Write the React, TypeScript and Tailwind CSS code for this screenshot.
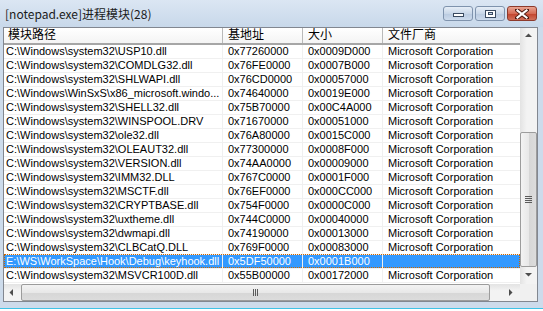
import React from "react";

const rows: [string, string, string, string][] = [
  ["C:\\Windows\\system32\\USP10.dll", "0x77260000", "0x0009D000", "Microsoft Corporation"],
  ["C:\\Windows\\system32\\COMDLG32.dll", "0x76FE0000", "0x0007B000", "Microsoft Corporation"],
  ["C:\\Windows\\system32\\SHLWAPI.dll", "0x76CD0000", "0x00057000", "Microsoft Corporation"],
  ["C:\\Windows\\WinSxS\\x86_microsoft.windo...", "0x74640000", "0x0019E000", "Microsoft Corporation"],
  ["C:\\Windows\\system32\\SHELL32.dll", "0x75B70000", "0x00C4A000", "Microsoft Corporation"],
  ["C:\\Windows\\system32\\WINSPOOL.DRV", "0x71670000", "0x00051000", "Microsoft Corporation"],
  ["C:\\Windows\\system32\\ole32.dll", "0x76A80000", "0x0015C000", "Microsoft Corporation"],
  ["C:\\Windows\\system32\\OLEAUT32.dll", "0x77300000", "0x0008F000", "Microsoft Corporation"],
  ["C:\\Windows\\system32\\VERSION.dll", "0x74AA0000", "0x00009000", "Microsoft Corporation"],
  ["C:\\Windows\\system32\\IMM32.DLL", "0x767C0000", "0x0001F000", "Microsoft Corporation"],
  ["C:\\Windows\\system32\\MSCTF.dll", "0x76EF0000", "0x000CC000", "Microsoft Corporation"],
  ["C:\\Windows\\system32\\CRYPTBASE.dll", "0x754F0000", "0x0000C000", "Microsoft Corporation"],
  ["C:\\Windows\\system32\\uxtheme.dll", "0x744C0000", "0x00040000", "Microsoft Corporation"],
  ["C:\\Windows\\system32\\dwmapi.dll", "0x74190000", "0x00013000", "Microsoft Corporation"],
  ["C:\\Windows\\system32\\CLBCatQ.DLL", "0x769F0000", "0x00083000", "Microsoft Corporation"],
  ["E:\\WS\\WorkSpace\\Hook\\Debug\\keyhook.dll", "0x5DF50000", "0x0001B000", ""],
  ["C:\\Windows\\system32\\MSVCR100D.dll", "0x55B00000", "0x00172000", "Microsoft Corporation"],
];

const SEL = 15;

function CapBtn({ kind }: { kind: "min" | "max" | "close" }) {
  const isClose = kind === "close";
  return (
    <div
      className={
        "flex h-[15px] items-center justify-center rounded-[3px] border " +
        (isClose
          ? "w-[30px] border-[#8d3a2c] bg-[linear-gradient(#e9a592,#d56b55_50%,#c2422b_51%,#d0705a)]"
          : "w-[30px] border-[#7f93ad] bg-[linear-gradient(#e6eef7,#c9d7e8_50%,#b9cae0_51%,#cddbec)]")
      }
    >
      {kind === "min" && (
        <div className="mt-[3px] h-[4px] w-[11px] border border-[#3a4a60] bg-white" />
      )}
      {kind === "max" && (
        <div className="flex h-[8px] w-[11px] items-center justify-center border border-[#3a4a60] bg-white">
          <div className="h-[3px] w-[5px] border border-[#3a4a60] bg-[#c9d7e8]" />
        </div>
      )}
      {kind === "close" && (
        <svg width="14" height="10" viewBox="0 0 14 10">
          <path d="M2 1 L12 9 M12 1 L2 9" stroke="#4a1a12" strokeWidth="4" strokeLinecap="square" />
          <path d="M2.5 1.5 L11.5 8.5 M11.5 1.5 L2.5 8.5" stroke="#ffffff" strokeWidth="2.2" strokeLinecap="square" />
        </svg>
      )}
    </div>
  );
}

function Arrow({ dir }: { dir: "up" | "down" | "left" | "right" }) {
  const d =
    dir === "up"
      ? "M1 5 L4.5 1.5 L8 5 Z"
      : dir === "down"
      ? "M1 2 L4.5 5.5 L8 2 Z"
      : dir === "left"
      ? "M5 1 L1.5 4.5 L5 8 Z"
      : "M2 1 L5.5 4.5 L2 8 Z";
  return (
    <svg width="9" height="9" viewBox="0 0 9 9">
      <path d={d} fill="#4d4d4d" />
    </svg>
  );
}

export default function App() {
  const font = { fontFamily: '"Liberation Sans", Arial, sans-serif' };
  const cjk = { fontFamily: '"Liberation Sans", "Noto Sans CJK SC", sans-serif' };
  const title = { fontFamily: '"Noto Sans CJK SC", sans-serif' };
  return (
    <div className="relative h-[311px] w-[543px] overflow-hidden bg-[#cddbeb]">
      {/* title bar */}
      <div className="flex h-[27px] items-start bg-[linear-gradient(#dbe6f3,#c8d8ea)]">
        <div className="pl-[5px] pt-[5px] text-[12px] leading-[17px] text-[#1b1b1b]" style={title}>
          [notepad.exe]进程模块(28)
        </div>
        <div className="ml-auto mr-[6px] mt-[6px] flex gap-[2px]">
          <CapBtn kind="min" />
          <CapBtn kind="max" />
          <CapBtn kind="close" />
        </div>
      </div>

      {/* client */}
      <div className="flex">
        <div className="w-[3px]" />
        <div className="flex w-[535px] flex-col border border-[#828790] bg-white">
          <div className="flex">
            {/* list */}
            <div className="w-[516px]">
              {/* header */}
              <div
                className="flex h-[17px] border-b-[2px] border-[#a6a6a6] bg-[linear-gradient(#ffffff,#f4f4f4)] text-[12px] leading-[15px] text-black"
                style={cjk}
              >
                <div className="w-[219px] border-r border-[#b9b9b9] pl-[4px]">模块路径</div>
                <div className="w-[80px] border-r border-[#b9b9b9] pl-[5px]">基地址</div>
                <div className="w-[80px] border-r border-[#b9b9b9] pl-[5px]">大小</div>
                <div className="flex-1 pl-[5px]">文件厂商</div>
              </div>
              {/* rows */}
              <div className="text-[11px] leading-[13px]" style={font}>
                {rows.map((r, i) => {
                  const sel = i === SEL;
                  return (
                    <div
                      key={i}
                      className={
                        "relative flex h-[14px] border-b border-[#f0f0f0] " +
                        (sel ? "bg-[#3399ff] text-white" : "text-black")
                      }
                    >
                      <div className="w-[219px] overflow-hidden whitespace-nowrap border-r border-[#f0f0f0] pl-[2px]">
                        {r[0]}
                      </div>
                      <div className="w-[80px] whitespace-nowrap border-r border-[#f0f0f0] pl-[5px]">{r[1]}</div>
                      <div className="w-[80px] whitespace-nowrap border-r border-[#f0f0f0] pl-[5px]">{r[2]}</div>
                      <div className="flex-1 whitespace-nowrap pl-[5px]">{r[3]}</div>
                      {sel && (
                        <div className="pointer-events-none absolute inset-x-0 -top-px bottom-0 border border-dotted border-[#cc6600]" />
                      )}
                    </div>
                  );
                })}
              </div>
            </div>
            {/* vertical scrollbar */}
            <div className="flex h-[256px] w-[17px] flex-col bg-[linear-gradient(90deg,#e3e3e3,#f3f3f3_40%,#f3f3f3)]">
              <div className="flex h-[17px] items-center justify-center">
                <Arrow dir="up" />
              </div>
              <div className="flex flex-1 flex-col justify-end">
                <div className="flex h-[135px] items-center justify-center rounded-[2px] border border-[#9c9c9c] bg-[linear-gradient(90deg,#f3f3f3,#e8e8e8_50%,#d6d6d6_51%,#dcdcdc)]">
                  <div className="flex flex-col gap-[1px]">
                    <div className="h-px w-[7px] bg-[#5a5a5a]" />
                    <div className="h-px w-[7px] bg-[#5a5a5a]" />
                    <div className="h-px w-[7px] bg-[#5a5a5a]" />
                    <div className="h-px w-[7px] bg-[#5a5a5a]" />
                  </div>
                </div>
              </div>
              <div className="flex h-[17px] items-center justify-center">
                <Arrow dir="down" />
              </div>
            </div>
          </div>
          {/* horizontal scrollbar row */}
          <div className="flex h-[17px]">
            <div className="flex w-[516px] bg-[linear-gradient(#e3e3e3,#f3f3f3_40%,#f3f3f3)]">
              <div className="flex w-[17px] items-center justify-center">
                <Arrow dir="left" />
              </div>
              <div className="flex flex-1 items-stretch">
                <div className="flex w-[469px] items-center justify-center rounded-[2px] border border-[#9c9c9c] bg-[linear-gradient(#f3f3f3,#e8e8e8_50%,#d6d6d6_51%,#dcdcdc)]">
                  <div className="flex gap-[1px]">
                    <div className="h-[7px] w-px bg-[#5a5a5a]" />
                    <div className="h-[7px] w-px bg-[#5a5a5a]" />
                    <div className="h-[7px] w-px bg-[#5a5a5a]" />
                  </div>
                </div>
              </div>
              <div className="flex w-[17px] items-center justify-center">
                <Arrow dir="right" />
              </div>
            </div>
            <div className="w-[17px] bg-[#f0f0f0]" />
          </div>
        </div>
      </div>
      <div className="absolute inset-x-0 bottom-[2px] h-px bg-[#3fc2e6]" />
      <div className="absolute inset-x-0 bottom-0 h-[2px] bg-white" />
    </div>
  );
}
